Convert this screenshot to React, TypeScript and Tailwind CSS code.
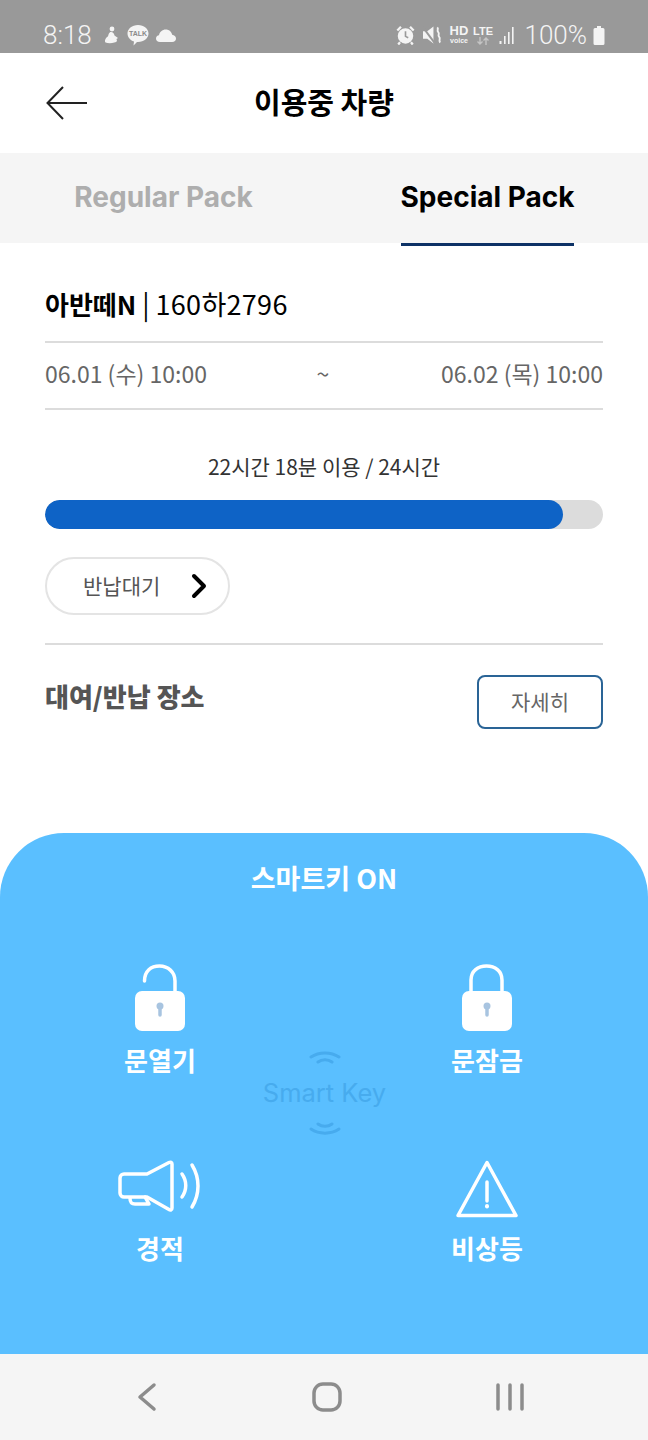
const FONT = "font-['Noto_Sans_CJK_KR','Noto_Sans',sans-serif]"

function StatusBar() {
  return (
    <div className="flex h-[53px] items-end justify-between bg-[#999999] pb-[2px] pl-[43px] pr-[43px] text-[#f4f4f4]">
      <div className="flex items-center">
        <span className="font-['Roboto',sans-serif] text-[26px] font-light leading-[32px]">8:18</span>
        {/* figure */}
        <svg className="ml-[11px]" width="17" height="18" viewBox="0 0 15 18" fill="#f4f4f4">
          <circle cx="8" cy="3" r="2.400" />
          <path d="M7 6c2 0 3 1.500 3.500 3.500L14 12l-1.500 1 .5 2c-1 2-8 3-11.500 1.500C0 15 2 11 4 10.500 4.500 8.500 5 6 7 6z" />
        </svg>
        <svg className="ml-[6px]" width="24" height="24" viewBox="0 0 24 24">
          <path fill="#f4f4f4" d="M12 2c6 0 10.500 3.700 10.500 8.500S18 19 12 19l-1 0-3.500 3.500.5-4C4 17 1.500 14.200 1.500 10.500 1.500 5.700 6 2 12 2z" />
          <text x="12" y="13" textAnchor="middle" fontSize="7" fontWeight="700" fill="#8a8a8a" fontFamily="Liberation Sans">TALK</text>
        </svg>
        <svg className="ml-[6px]" width="20" height="13" viewBox="0 0 20 13" fill="#f4f4f4">
          <path d="M4 13C1.500 13 0 11.500 0 9.500 0 7.800 1.300 6.500 3 6.300 3.500 3 6.300.5 9.800.5c3.200 0 5.800 2.200 6.400 5.300 2 .3 3.800 1.500 3.800 3.700 0 2-1.500 3.500-3.800 3.500z" />
        </svg>
      </div>
      <div className="flex items-center">
        {/* alarm */}
        <svg width="19" height="20" viewBox="0 0 20 22">
          <circle cx="10" cy="12" r="8.500" fill="#f4f4f4" />
          <path d="M10 7v5.500l3 1.500" stroke="#999" strokeWidth="1.800" fill="none" />
          <path d="M1 6l4-4M19 6l-4-4M4 19l-2 2.500M16 19l2 2.500" stroke="#f4f4f4" strokeWidth="2.500" />
        </svg>
        {/* mute + vibrate */}
        <svg className="ml-[8px]" width="19" height="20" viewBox="0 0 20 20">
          <path d="M0 6h4.500L11 1v18l-6.500-5H0z" fill="#f4f4f4" />
          <path d="M0 2l12 16" stroke="#999" strokeWidth="2" />
          <path d="M15 2c2 2-1 3 1 5s-1 3 1 5-1 3 1 6" stroke="#f4f4f4" strokeWidth="2" fill="none" />
        </svg>
        <div className="ml-[8px] flex w-[19px] flex-col items-center font-['Liberation_Sans',sans-serif] font-bold">
          <span className="text-[13px] leading-[12px]">HD</span>
          <span className="text-[7px] leading-[8px]">voice</span>
        </div>
        <div className="ml-[5px] flex w-[19px] flex-col items-center font-['Liberation_Sans',sans-serif] font-bold">
          <span className="text-[11px] leading-[12px]">LTE</span>
          <svg width="14" height="8" viewBox="0 0 14 8" stroke="#c4c4c4" strokeWidth="1.400" fill="none">
            <path d="M4 0v7M1.500 4.500 4 7l2.500-2.500M10 8V1M7.500 3.500 10 1l2.500 2.500" />
          </svg>
        </div>
        {/* signal */}
        <svg className="ml-[6px]" width="16" height="19" viewBox="0 0 15 19" fill="#f4f4f4">
          <rect x="0" y="15" width="2" height="3" />
          <rect x="4.500" y="10" width="1.600" height="8" />
          <rect x="8.500" y="6" width="1.600" height="12" />
          <rect x="12.500" y="1" width="1.600" height="17" />
        </svg>
        <span className="ml-[10px] font-['Roboto',sans-serif] text-[26px] font-light leading-[32px]">100%</span>
        <svg className="ml-[6px]" width="12" height="19" viewBox="0 0 11 19" fill="#f4f4f4">
          <path d="M3.500 0h4v2H9.500A1.500 1.500 0 0 1 11 3.500v14A1.500 1.500 0 0 1 9.500 19h-8A1.500 1.500 0 0 1 0 17.500v-14A1.500 1.500 0 0 1 1.500 2h2z" />
        </svg>
      </div>
    </div>
  )
}

function Header() {
  return (
    <div className="relative flex h-[100px] items-center justify-center bg-white pb-[4px]">
      <svg className="absolute left-[45px] top-[32px]" width="44" height="36" viewBox="0 0 44 36" fill="none" stroke="#222" strokeWidth="2">
        <path d="M42 18H3M18 2 2.500 18 18 34" />
      </svg>
      <h1 className="text-[29px] font-bold leading-none text-black">이용중 차량</h1>
    </div>
  )
}

function Tabs() {
  return (
    <div className="relative z-10 grid h-[90px] grid-cols-[327px_1fr] bg-[#f5f5f5] font-['Inter',sans-serif] text-[28px] font-bold">
      <div className="flex items-center justify-center pb-[6px] text-[#aeaeae]">Regular Pack</div>
      <div className="flex justify-start pl-[74px]">
        <div className="flex h-[93px] w-[173px] items-center justify-center whitespace-nowrap border-b-[3px] border-[#0d3266] pb-[3px] text-black">
          Special Pack
        </div>
      </div>
    </div>
  )
}

function Info() {
  return (
    <div className="bg-white px-[45px]">
      <div className="flex h-[100px] items-center border-b-2 border-[#dcdcdc] pt-[23px] text-[27px] leading-none text-black">
        <span className="text-[26px] font-bold">아반떼N</span>
        <span className="ml-[6px]">|</span>
        <span className="ml-[6px] tracking-[0.3px]">160하2796</span>
      </div>
      <div className="flex h-[67px] items-center justify-between border-b-2 border-[#dcdcdc] pb-[5px] text-[23px] text-[#666666]">
        <span>06.01 (수) 10:00</span>
        <span className="pr-[2px]">~</span>
        <span>06.02 (목) 10:00</span>
      </div>
      <p className="mt-[43px] text-center text-[21px] leading-[26px] text-[#333333]">22시간 18분 이용 / 24시간</p>
      <div className="mt-[21px] h-[29px] overflow-hidden rounded-full bg-[#dcdcdc]">
        <div className="h-full rounded-full bg-[#0e63c6]" style={{ width: `${(518 / 558) * 100}%` }} />
      </div>
      <button className="mt-[28px] flex h-[58px] w-[185px] items-center rounded-full border-2 border-[#e4e4e4] pl-[36px] text-[21px] text-[#555555]">
        <span>반납대기</span>
        <svg className="ml-[31px]" width="16" height="26" viewBox="0 0 16 26" fill="none" stroke="#000" strokeWidth="4" strokeLinecap="round" strokeLinejoin="round">
          <path d="M3 3l10 10L3 23" />
        </svg>
      </button>
      <div className="mt-[28px] flex items-start justify-between border-t-2 border-[#dcdcdc] pt-[30px]">
        <h2 className="mt-[5px] text-[26px] font-black leading-[32px] text-[#555555]">대여/반납 장소</h2>
        <button className="h-[54px] w-[126px] rounded-[8px] border-2 border-[#2a6496] text-[21px] text-[#666666]">자세히</button>
      </div>
    </div>
  )
}

function LockIcon({ open }: { open?: boolean }) {
  return (
    <svg width="52" height="68" viewBox="0 0 52 68">
      <path
        d={open ? 'M10.500 17C10.500 7 17 2 25.500 2S41 8 41 17v12' : 'M10 30V16C10 7 17 2 25.500 2S41 7 41 16v14'}
        fill="none"
        stroke="#fff"
        strokeWidth="3.500"
        strokeLinecap="round"
      />
      <rect x="1" y="27" width="50" height="40" rx="7" fill="#fff" />
      <path d="M26 41v10" stroke="#a8c4e0" strokeWidth="3.500" strokeLinecap="round" />
      <circle cx="26" cy="42" r="3.500" fill="#a8c4e0" />
    </svg>
  )
}

function HornIcon() {
  return (
    <svg width="84" height="52" viewBox="0 0 84 52" fill="none" stroke="#fff" strokeWidth="3.500" strokeLinecap="round" strokeLinejoin="round">
      <path d="M6 14h23L51 2.500c1.500-.8 3-.2 3 1.500v44c0 2-1.500 2.500-3 1.500L29 37H6c-2 0-4-1.500-4-4V18c0-2.500 2-4 4-4z" />
      <path d="M12 38c0 4 1 6 5 6h14l-4-7" />
      <path d="M64 14c5 7 5 16 0 23" />
      <path d="M74 5c8 13 8 29 0 42" />
    </svg>
  )
}

function WarningIcon() {
  return (
    <svg width="62" height="58" viewBox="0 0 62 58" fill="none" stroke="#fff" strokeWidth="3.500" strokeLinecap="round" strokeLinejoin="round">
      <path d="M31 2.500 60 55.500H2z" />
      <path d="M31 22v19" />
      <path d="M31 46v.5" strokeWidth="4" />
    </svg>
  )
}

function ControlItem({ icon, label, iconH }: { icon: React.ReactNode; label: string; iconH: number }) {
  return (
    <div className="flex h-[196px] flex-col items-center">
      <div className="flex w-full items-start justify-center" style={{ height: iconH }}>{icon}</div>
      <span className="whitespace-nowrap text-[26px] font-bold leading-[36px] text-white">{label}</span>
    </div>
  )
}

function SmartKey() {
  return (
    <div className="relative h-[521px] rounded-t-[64px] bg-[#5abfff] pt-[26px]">
      <h3 className="text-center text-[27px] font-bold leading-[38px] text-white">스마트키 ON</h3>
      <div className="mt-[67px] grid grid-cols-[200px_200px] gap-x-[127px] pl-[60px]">
        <ControlItem icon={<LockIcon open />} label="문열기" iconH={78} />
        <ControlItem icon={<LockIcon />} label="문잠금" iconH={78} />
        <ControlItem icon={<HornIcon />} label="경적" iconH={70} />
        <ControlItem icon={<WarningIcon />} label="비상등" iconH={70} />
      </div>
      {/* watermark in the middle of the four controls */}
      <div className="absolute left-[262px] top-[218px] flex w-[125px] flex-col items-center text-[#47abee]">
        <svg width="32" height="13" viewBox="0 0 32 13" fill="none" stroke="currentColor" strokeLinecap="round">
          <path d="M2 6C10 .5 22 .5 30 6" strokeWidth="3" />
          <path d="M9 11c4-3 10-3 14 0" strokeWidth="3" />
        </svg>
        <span className="mt-[12px] font-['Inter',sans-serif] text-[25.500px] leading-[34px]">Smart Key</span>
        <svg className="mt-[12px]" width="32" height="13" viewBox="0 0 32 13" fill="none" stroke="currentColor" strokeLinecap="round">
          <path d="M9 2c4 3 10 3 14 0" strokeWidth="3" />
          <path d="M2 7c8 5.500 20 5.500 28 0" strokeWidth="3" />
        </svg>
      </div>
    </div>
  )
}

function NavBar() {
  return (
    <div className="flex h-[86px] items-center justify-between bg-[#f5f5f5] pl-[137px] pr-[124px]">
      <svg width="20" height="30" viewBox="0 0 20 30" fill="none" stroke="#8c8c8c" strokeWidth="3.500" strokeLinecap="round" strokeLinejoin="round">
        <path d="M17 3 3 15l14 12" />
      </svg>
      <svg width="30" height="30" viewBox="0 0 30 30" fill="none" stroke="#8c8c8c" strokeWidth="3.500">
        <rect x="2" y="2" width="26" height="26" rx="9" />
      </svg>
      <svg width="28" height="28" viewBox="0 0 28 28" fill="none" stroke="#8c8c8c" strokeWidth="3.500" strokeLinecap="round">
        <path d="M2 2v24M14 2v24M26 2v24" />
      </svg>
    </div>
  )
}

export default function App() {
  return (
    <div className={`flex h-[1440px] w-[648px] flex-col overflow-hidden bg-white ${FONT}`}>
      <StatusBar />
      <Header />
      <Tabs />
      <Info />
      <div className="flex-1" />
      <SmartKey />
      <NavBar />
    </div>
  )
}
